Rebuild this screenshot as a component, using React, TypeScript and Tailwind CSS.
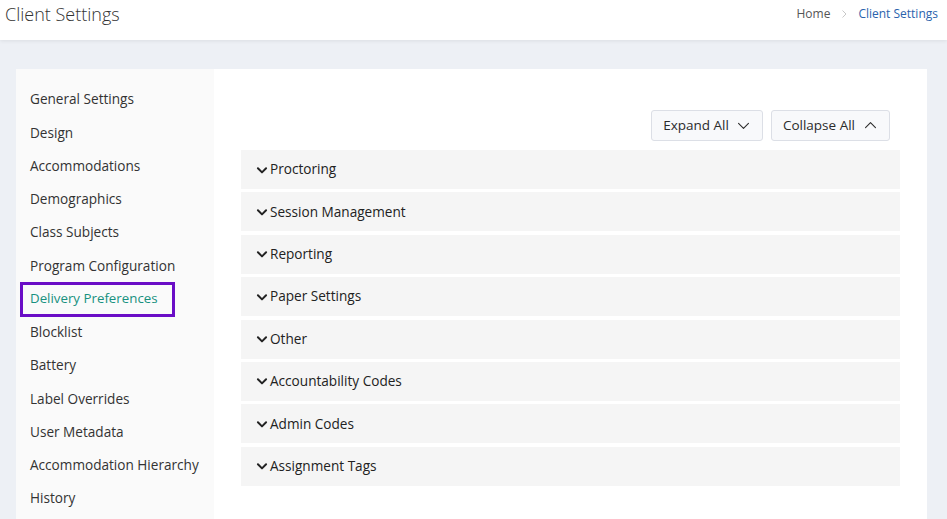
import React from "react";

const menu = [
  "General Settings",
  "Design",
  "Accommodations",
  "Demographics",
  "Class Subjects",
  "Program Configuration",
  "Delivery Preferences",
  "Blocklist",
  "Battery",
  "Label Overrides",
  "User Metadata",
  "Accommodation Hierarchy",
  "History",
];

const sections = [
  "Proctoring",
  "Session Management",
  "Reporting",
  "Paper Settings",
  "Other",
  "Accountability Codes",
  "Admin Codes",
  "Assignment Tags",
];

const ChevronDown: React.FC<{ className?: string; strokeWidth?: number }> = ({ className, strokeWidth = 1.5 }) => (
  <svg viewBox="0 0 24 24" fill="none" stroke="currentColor" strokeWidth={strokeWidth} strokeLinecap="round" strokeLinejoin="round" className={className}>
    <path d="M5 9l7 7 7-7" />
  </svg>
);

const ChevronUp: React.FC<{ className?: string }> = ({ className }) => (
  <svg viewBox="0 0 24 24" fill="none" stroke="currentColor" strokeWidth={1.5} strokeLinecap="round" strokeLinejoin="round" className={className}>
    <path d="M5 15l7-7 7 7" />
  </svg>
);

const App: React.FC = () => {
  return (
    <div className="min-h-screen w-full bg-[#edf0f5] font-['Open_Sans',sans-serif] text-[#2b2b2b]">
      <header className="flex h-[40px] items-start justify-between bg-white px-[5px] pt-[2px] shadow-[0_1px_4px_rgba(0,0,0,0.08)]">
        <h1 className="text-[18px] font-light leading-[24px] text-[#333]">Client Settings</h1>
        <nav className="flex h-[24px] items-center pr-[4px] text-[12px]">
          <span className="text-[#555]">Home</span>
          <svg viewBox="0 0 24 24" fill="none" stroke="#c8c8c8" strokeWidth={2} className="mx-[8px] h-[12px] w-[12px]">
            <path d="M9 5l7 7-7 7" />
          </svg>
          <span className="text-[#2a63ad]">Client Settings</span>
        </nav>
      </header>

      <div className="flex pl-[16px] pr-[20px] pt-[29px]">
        <div className="flex min-h-[460px] w-full bg-white">
          <aside className="w-[198px] shrink-0 bg-[#fafafa] pt-[14px]">
            {menu.map((m) => {
              const active = m === "Delivery Preferences";
              return (
                <div key={m} className="flex h-[33.25px] items-center whitespace-nowrap">
                  {active ? (
                    <div className="ml-[4px] flex h-[35px] w-[155px] items-center border-[3px] border-[#6a0dc6] pl-[7px] text-[13.3px] text-[#17917f]">
                      {m}
                    </div>
                  ) : (
                    <span className="pl-[14px] text-[13.6px] text-[#333]">{m}</span>
                  )}
                </div>
              );
            })}
          </aside>

          <main className="flex-1 pb-[20px] pl-[27px] pr-[27px] pt-[41px]">
            <div className="flex justify-end gap-[8px] pr-[10px]">
              <button className="flex h-[31px] items-center gap-[6px] rounded-[3px] border border-[#dcdfe6] bg-[#f8f9fb] pl-[11px] pr-[10px] text-[13.5px] text-[#2b2b2b]">
                Expand All
                <ChevronDown className="h-[17px] w-[17px]" />
              </button>
              <button className="flex h-[31px] items-center gap-[7px] rounded-[3px] border border-[#dcdfe6] bg-[#f8f9fb] pl-[11px] pr-[10px] text-[13.5px] text-[#2b2b2b]">
                Collapse All
                <ChevronUp className="h-[17px] w-[17px]" />
              </button>
            </div>
            <div className="mt-[9px] flex flex-col gap-[3.4px]">
              {sections.map((s) => (
                <div key={s} className="flex h-[39px] items-center bg-[#f5f5f5] pl-[14px] text-[13.6px] text-[#222]">
                  <ChevronDown className="mr-[1px] h-[14px] w-[14px]" strokeWidth={3.4} />
                  {s}
                </div>
              ))}
            </div>
          </main>
        </div>
      </div>
    </div>
  );
};

export default App;
